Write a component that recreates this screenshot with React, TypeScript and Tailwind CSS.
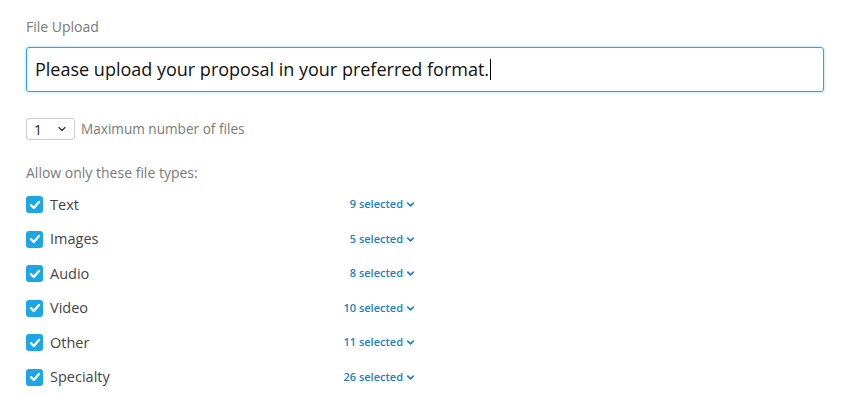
import { ChevronDown } from 'lucide-react'

const fileTypes = [
  { label: 'Text', count: 9 },
  { label: 'Images', count: 5 },
  { label: 'Audio', count: 8 },
  { label: 'Video', count: 10 },
  { label: 'Other', count: 11 },
  { label: 'Specialty', count: 26 },
]

function CheckBox() {
  return (
    <span className="flex h-[17px] w-[17px] items-center justify-center rounded-[3px] bg-[#1da6e6]">
      <svg width="12" height="12" viewBox="0 0 12 12" fill="none">
        <path d="M2 6.2 4.8 9 10 3" stroke="white" strokeWidth="2.4" strokeLinecap="round" strokeLinejoin="round" />
      </svg>
    </span>
  )
}

export default function App() {
  return (
    <main className="min-h-screen bg-white px-[26px] pt-[19px] font-['Open_Sans',sans-serif]">
      <div className="text-[14px] leading-4 text-[#7a7a7a]">File Upload</div>

      <div className="mt-[12px] flex h-[45px] w-[798px] items-center rounded-[3px] border border-[#27a8e6] px-[8px] shadow-[0_0_3px_#8fd3f3]">
        <span className="text-[18px] text-[#111]">Please upload your proposal in your preferred format.</span>
        <span className="ml-px h-[21px] w-px bg-black" />
      </div>

      <div className="mt-[26px] flex items-center gap-[6px]">
        <div className="flex h-[22px] w-[49px] items-center justify-between rounded-[3px] border border-[#ccc] pr-[6px] pl-[7px]">
          <span className="text-[14px] text-[#222]">1</span>
          <ChevronDown size={12} strokeWidth={2.5} className="text-[#333]" />
        </div>
        <span className="text-[13.6px] text-[#7a7a7a]">Maximum number of files</span>
      </div>

      <div className="mt-[25px] text-[14px] leading-4 text-[#7a7a7a]">Allow only these file types:</div>

      <ul className="mt-[15px] flex w-[390px] flex-col gap-[17.5px]">
        {fileTypes.map((t) => (
          <li key={t.label} className="flex h-[17px] items-center">
            <CheckBox />
            <span className="ml-[7px] text-[14.5px] text-[#444]">{t.label}</span>
            <span className="ml-auto flex items-center gap-[2px] text-[11px] font-semibold text-[#1b82c0]">
              {t.count} selected
              <ChevronDown size={11} strokeWidth={3.5} />
            </span>
          </li>
        ))}
      </ul>
    </main>
  )
}
